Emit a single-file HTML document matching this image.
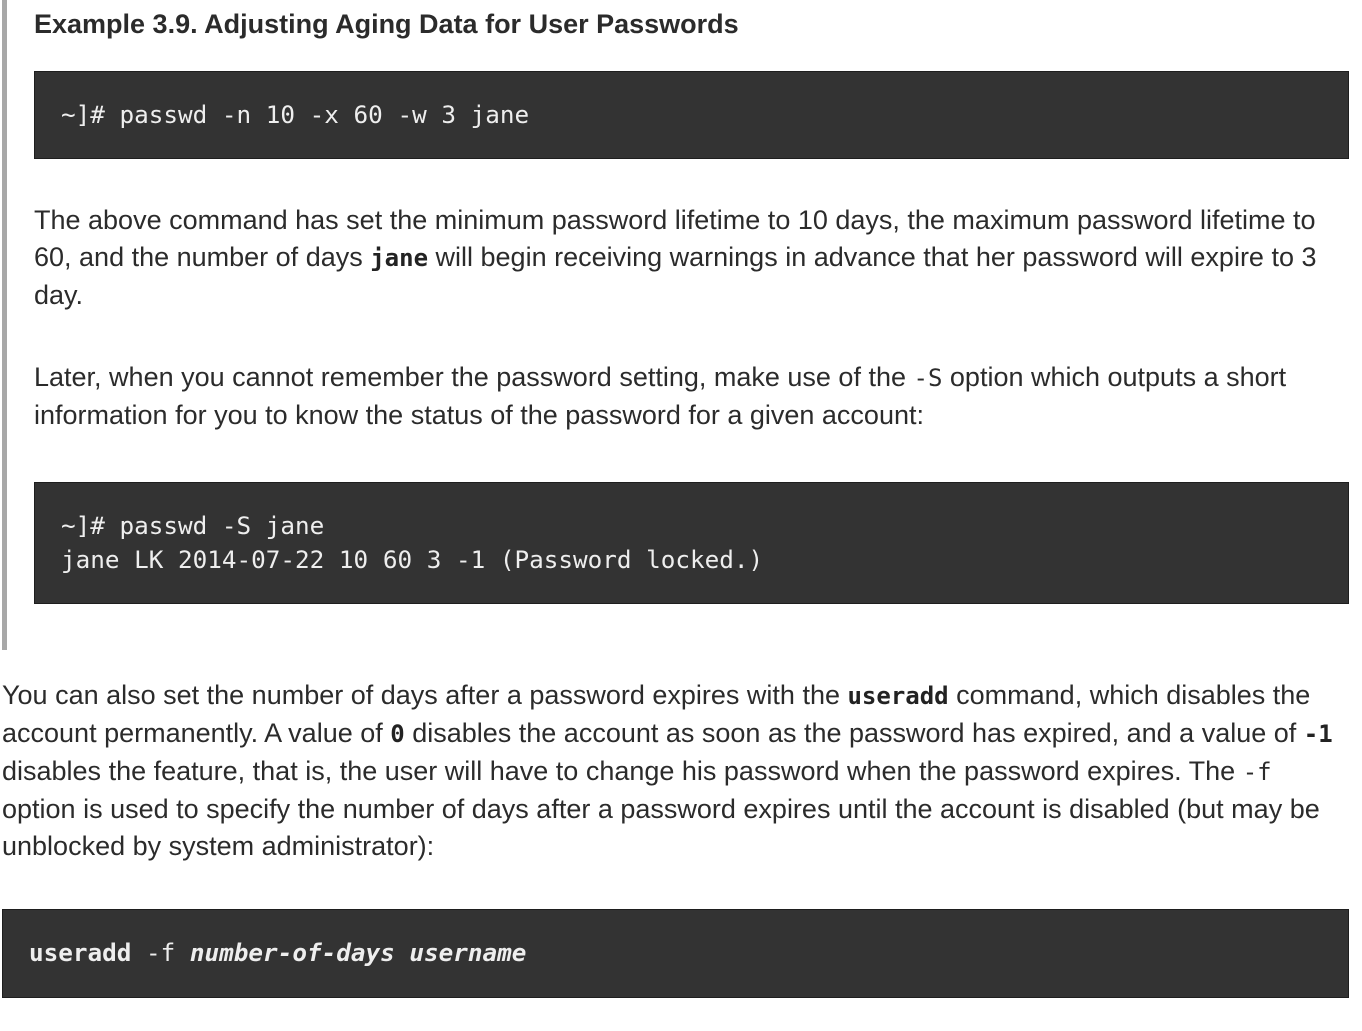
<!DOCTYPE html>
<html><head><style>
html,body{margin:0;padding:0;background:#fff;width:1362px;height:1031px;overflow:hidden}
body{font-family:"Liberation Sans",sans-serif;color:#2b2b2b;font-size:27px;line-height:37px;position:relative}
.bar{position:absolute;left:2px;top:0;width:5px;height:650px;background:#a8a8a8}
.ex{position:absolute;left:34px;top:0;width:1315px}
h3{margin:0;position:absolute;top:6px;left:0;font-size:27px;font-weight:bold;line-height:37px;white-space:nowrap;color:#2b2b2b}
pre{margin:0;background:#333;color:#eee;border:1px solid #1e1e1e;font-family:"DejaVu Sans Mono",monospace;font-size:24.3px;line-height:34px;padding:0 0 0 26px;box-sizing:border-box;position:absolute;white-space:pre}
p{margin:0;position:absolute}
code{font-family:"DejaVu Sans Mono",monospace;font-size:24px}
b.c{font-family:"DejaVu Sans Mono",monospace;font-size:24px;color:#222}
</style></head><body>
<div class="bar"></div>
<div class="ex">
<h3>Example 3.9. Adjusting Aging Data for User Passwords</h3>
<pre style="left:0;top:71px;width:1315px;height:88px;padding-top:26px">~]# passwd -n 10 -x 60 -w 3 jane</pre>
<p style="left:0;top:202px;width:1300px">The above command has set the minimum password lifetime to 10 days, the maximum password lifetime to 60, and the number of days <b class="c">jane</b> will begin receiving warnings in advance that her password will expire to 3 day.</p>
<p style="left:0;top:359px;width:1300px">Later, when you cannot remember the password setting, make use of the <code>-S</code> option which outputs a short information for you to know the status of the password for a given account:</p>
<pre style="left:0;top:482px;width:1315px;height:122px;padding-top:26px">~]# passwd -S jane
jane LK 2014-07-22 10 60 3 -1 (Password locked.)</pre>
</div>
<p style="left:2px;top:677px;width:1340px">You can also set the number of days after a password expires with the <b class="c">useradd</b> command, which disables the account permanently. A value of <b class="c">0</b> disables the account as soon as the password has expired, and a value of <b class="c">-1</b> disables the feature, that is, the user will have to change his password when the password expires. The <code>-f</code> option is used to specify the number of days after a password expires until the account is disabled (but may be unblocked by system administrator):</p>
<pre style="left:2px;top:909px;width:1347px;height:89px;padding-top:26px"><b>useradd</b> -f <b><i>number-of-days</i></b> <b><i>username</i></b></pre>
</body></html>
